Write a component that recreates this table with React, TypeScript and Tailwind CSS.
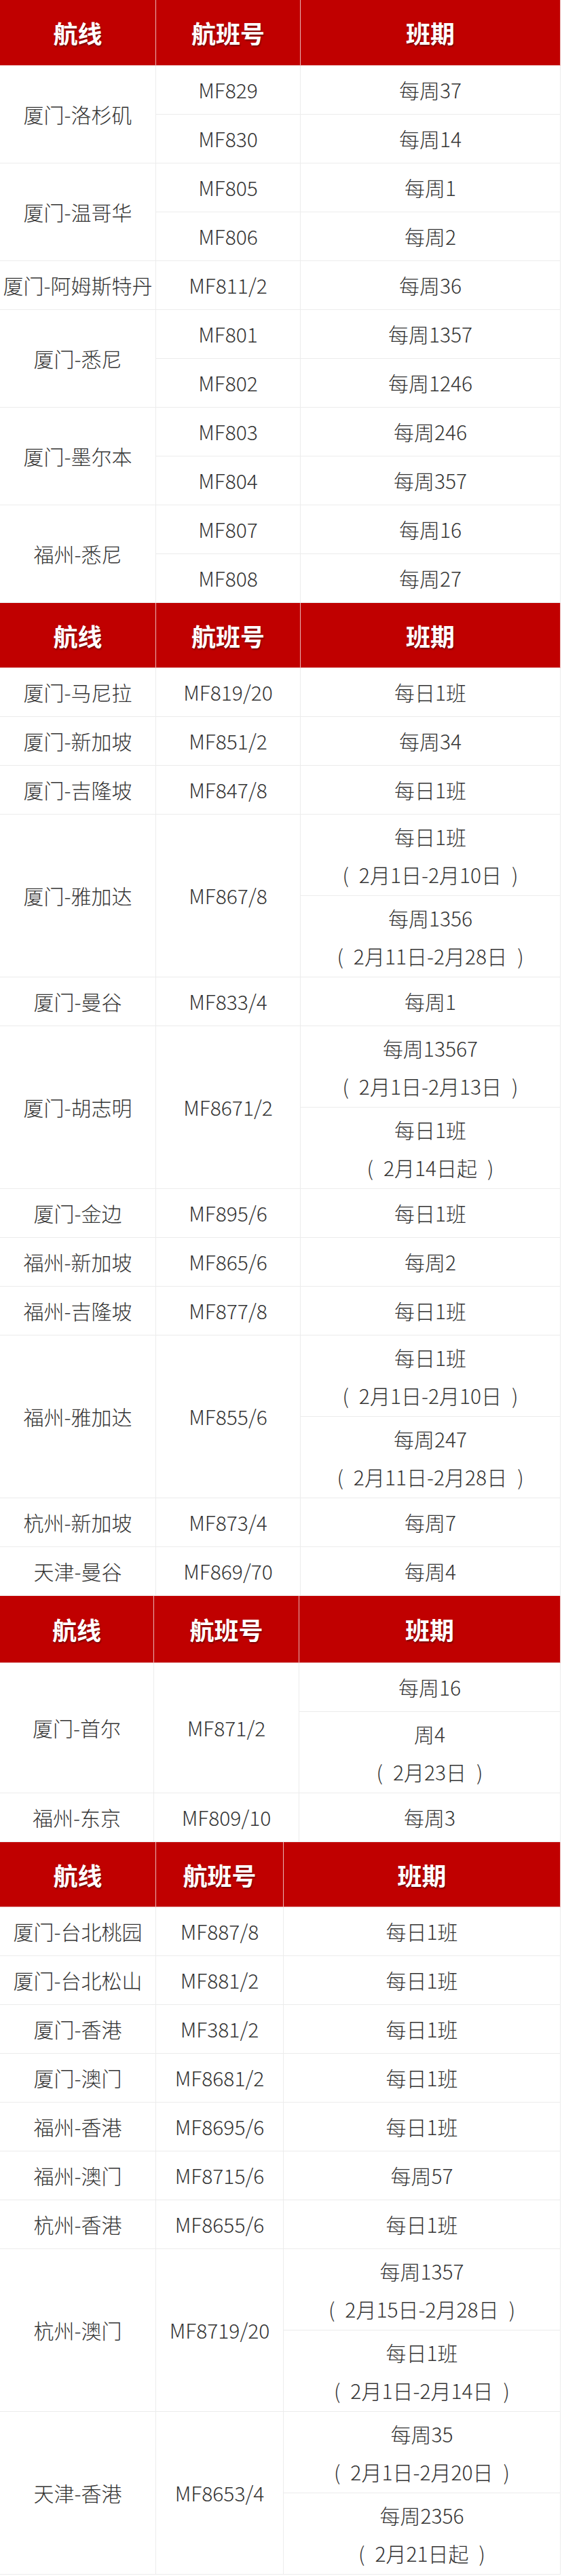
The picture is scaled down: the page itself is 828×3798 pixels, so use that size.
import * as React from "react"

type Flight = { no: string; sched: string[][] }
type Group = { route: string; flights: Flight[] }
type TableSpec = { cols: string; headH: string; groups: Group[] }

const one = (no: string, s: string): Flight => ({ no, sched: [[s]] })
// paren with a gap inside, like the original's full-width brackets
const p = (s: string) => `(\u2002${s}\u2002)`

const tables: TableSpec[] = [
  {
    cols: "grid-cols-[230px_213px_1fr]",
    headH: "h-[97px]",
    groups: [
      { route: "厦门-洛杉矶", flights: [one("MF829", "每周37"), one("MF830", "每周14")] },
      { route: "厦门-温哥华", flights: [one("MF805", "每周1"), one("MF806", "每周2")] },
      { route: "厦门-阿姆斯特丹", flights: [one("MF811/2", "每周36")] },
      { route: "厦门-悉尼", flights: [one("MF801", "每周1357"), one("MF802", "每周1246")] },
      { route: "厦门-墨尔本", flights: [one("MF803", "每周246"), one("MF804", "每周357")] },
      { route: "福州-悉尼", flights: [one("MF807", "每周16"), one("MF808", "每周27")] },
    ],
  },
  {
    cols: "grid-cols-[230px_213px_1fr]",
    headH: "h-[96px]",
    groups: [
      { route: "厦门-马尼拉", flights: [one("MF819/20", "每日1班")] },
      { route: "厦门-新加坡", flights: [one("MF851/2", "每周34")] },
      { route: "厦门-吉隆坡", flights: [one("MF847/8", "每日1班")] },
      {
        route: "厦门-雅加达",
        flights: [{ no: "MF867/8", sched: [["每日1班", p("2月1日-2月10日")], ["每周1356", p("2月11日-2月28日")]] }],
      },
      { route: "厦门-曼谷", flights: [one("MF833/4", "每周1")] },
      {
        route: "厦门-胡志明",
        flights: [{ no: "MF8671/2", sched: [["每周13567", p("2月1日-2月13日")], ["每日1班", p("2月14日起")]] }],
      },
      { route: "厦门-金边", flights: [one("MF895/6", "每日1班")] },
      { route: "福州-新加坡", flights: [one("MF865/6", "每周2")] },
      { route: "福州-吉隆坡", flights: [one("MF877/8", "每日1班")] },
      {
        route: "福州-雅加达",
        flights: [{ no: "MF855/6", sched: [["每日1班", p("2月1日-2月10日")], ["每周247", p("2月11日-2月28日")]] }],
      },
      { route: "杭州-新加坡", flights: [one("MF873/4", "每周7")] },
      { route: "天津-曼谷", flights: [one("MF869/70", "每周4")] },
    ],
  },
  {
    cols: "grid-cols-[227px_214px_1fr]",
    headH: "h-[99px]",
    groups: [
      { route: "厦门-首尔", flights: [{ no: "MF871/2", sched: [["每周16"], ["周4", p("2月23日")]] }] },
      { route: "福州-东京", flights: [one("MF809/10", "每周3")] },
    ],
  },
  {
    cols: "grid-cols-[230px_188px_1fr]",
    headH: "h-[96px]",
    groups: [
      { route: "厦门-台北桃园", flights: [one("MF887/8", "每日1班")] },
      { route: "厦门-台北松山", flights: [one("MF881/2", "每日1班")] },
      { route: "厦门-香港", flights: [one("MF381/2", "每日1班")] },
      { route: "厦门-澳门", flights: [one("MF8681/2", "每日1班")] },
      { route: "福州-香港", flights: [one("MF8695/6", "每日1班")] },
      { route: "福州-澳门", flights: [one("MF8715/6", "每周57")] },
      { route: "杭州-香港", flights: [one("MF8655/6", "每日1班")] },
      {
        route: "杭州-澳门",
        flights: [{ no: "MF8719/20", sched: [["每周1357", p("2月15日-2月28日")], ["每日1班", p("2月1日-2月14日")]] }],
      },
      {
        route: "天津-香港",
        flights: [{ no: "MF8653/4", sched: [["每周35", p("2月1日-2月20日")], ["每周2356", p("2月21日起")]] }],
      },
    ],
  },
]

const spanClass: Record<number, string> = {
  1: "row-span-1",
  2: "row-span-2",
  3: "row-span-3",
  4: "row-span-4",
}

const cellBase = "flex flex-col items-center justify-center border-r border-b border-[#ececec] bg-white text-center"

function HeaderCell({ label, h }: { label: string; h: string }) {
  return (
    <div
      className={`${h} flex items-center justify-center border-r border-b border-[#e9b4b4] bg-[#c00000] text-[36px] font-bold text-white [text-shadow:1px_2px_2px_rgba(60,0,0,0.55)]`}
    >
      {label}
    </div>
  )
}

function FlightTable({ spec }: { spec: TableSpec }) {
  return (
    <div className={`grid ${spec.cols} w-full`}>
      <HeaderCell label="航线" h={spec.headH} />
      <HeaderCell label="航班号" h={spec.headH} />
      <HeaderCell label="班期" h={spec.headH} />
      {spec.groups.map((g) => {
        const total = g.flights.reduce((n, f) => n + f.sched.length, 0)
        return (
          <React.Fragment key={g.route}>
            <div className={`${cellBase} ${spanClass[total]}`}>{g.route}</div>
            {g.flights.map((f) => (
              <React.Fragment key={f.no}>
                <div className={`${cellBase} ${spanClass[f.sched.length]}`}>{f.no}</div>
                {f.sched.map((lines, i) => (
                  <div
                    key={i}
                    className={`${cellBase} ${lines.length > 1 ? "h-[120px] leading-[56px]" : "h-[72px]"}`}
                  >
                    {lines.map((l) => (
                      <span key={l} className="whitespace-pre">{l}</span>
                    ))}
                  </div>
                ))}
              </React.Fragment>
            ))}
          </React.Fragment>
        )
      })}
    </div>
  )
}

export default function App() {
  return (
    <div className="w-[828px] bg-white pr-[2px] font-['Noto_Sans_CJK_SC','Noto_Sans',sans-serif] text-[30px] font-light text-[#333333]">
      {tables.map((t, i) => (
        <FlightTable key={i} spec={t} />
      ))}
    </div>
  )
}
